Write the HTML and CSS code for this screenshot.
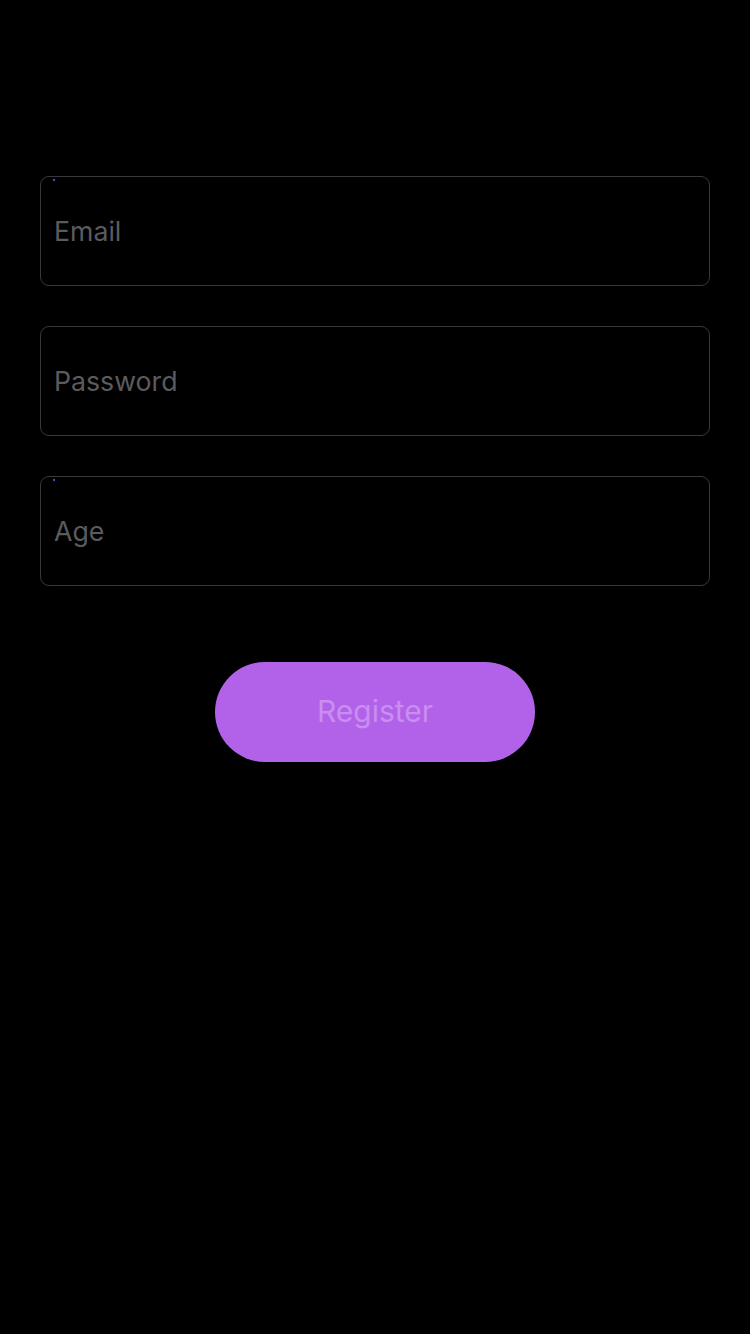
FILE: index.html
```html
<!DOCTYPE html>
<html>
<head>
<meta charset="utf-8">
<link rel="stylesheet" href="styles.css">
</head>
<body>
<main class="screen">
  <form class="form">
    <div class="field"><span class="cursor-dot"></span><span class="placeholder">Email</span></div>
    <div class="field"><span class="placeholder">Password</span></div>
    <div class="field"><span class="cursor-dot"></span><span class="placeholder">Age</span></div>
    <div class="actions"><button type="button" class="register">Register</button></div>
  </form>
</main>
</body>
</html>
```
FILE: styles.css
```css
html, body {
  margin: 0;
  padding: 0;
  background: #000;
  height: 100%;
}
.screen {
  padding: 176px 40px 0;
  font-family: Inter, Roboto, "Liberation Sans", sans-serif;
}
.form {
  display: flex;
  flex-direction: column;
  gap: 40px;
}
.field {
  position: relative;
  height: 110px;
  box-sizing: border-box;
  border: 1px solid #39393c;
  border-radius: 9px;
  display: flex;
  align-items: center;
  padding-left: 13px;
}
.placeholder {
  color: #5b5b5f;
  font-size: 26.7px;
  line-height: 1;
  margin-top: 1px;
}
.cursor-dot {
  position: absolute;
  left: 12px;
  top: 2px;
  width: 2px;
  height: 2px;
  background: #3d4bd8;
}
.actions {
  display: flex;
  justify-content: center;
  margin-top: 36px;
}
.register {
  width: 320px;
  height: 100px;
  border: none;
  border-radius: 50px;
  background: #b262e8;
  color: #c98ef0;
  font-family: Inter, Roboto, "Liberation Sans", sans-serif;
  font-size: 30px;
  line-height: 1;
  padding: 0 0 3px;
}
```
